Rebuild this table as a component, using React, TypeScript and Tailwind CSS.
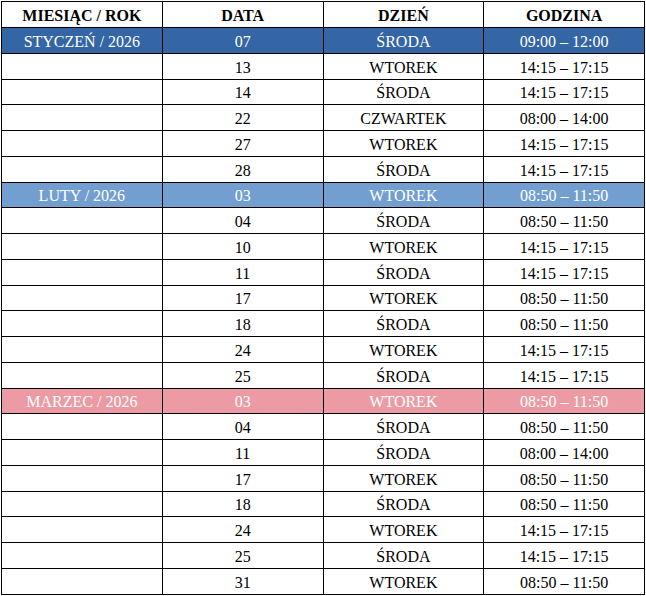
type Row = {
  month?: string
  date: string
  day: string
  time: string
  tone?: 'dark' | 'light' | 'pink'
}

const rows: Row[] = [
  { month: 'STYCZEŃ / 2026', date: '07', day: 'ŚRODA', time: '09:00 – 12:00', tone: 'dark' },
  { date: '13', day: 'WTOREK', time: '14:15 – 17:15' },
  { date: '14', day: 'ŚRODA', time: '14:15 – 17:15' },
  { date: '22', day: 'CZWARTEK', time: '08:00 – 14:00' },
  { date: '27', day: 'WTOREK', time: '14:15 – 17:15' },
  { date: '28', day: 'ŚRODA', time: '14:15 – 17:15' },
  { month: 'LUTY / 2026', date: '03', day: 'WTOREK', time: '08:50 – 11:50', tone: 'light' },
  { date: '04', day: 'ŚRODA', time: '08:50 – 11:50' },
  { date: '10', day: 'WTOREK', time: '14:15 – 17:15' },
  { date: '11', day: 'ŚRODA', time: '14:15 – 17:15' },
  { date: '17', day: 'WTOREK', time: '08:50 – 11:50' },
  { date: '18', day: 'ŚRODA', time: '08:50 – 11:50' },
  { date: '24', day: 'WTOREK', time: '14:15 – 17:15' },
  { date: '25', day: 'ŚRODA', time: '14:15 – 17:15' },
  { month: 'MARZEC / 2026', date: '03', day: 'WTOREK', time: '08:50 – 11:50', tone: 'pink' },
  { date: '04', day: 'ŚRODA', time: '08:50 – 11:50' },
  { date: '11', day: 'ŚRODA', time: '08:00 – 14:00' },
  { date: '17', day: 'WTOREK', time: '08:50 – 11:50' },
  { date: '18', day: 'ŚRODA', time: '08:50 – 11:50' },
  { date: '24', day: 'WTOREK', time: '14:15 – 17:15' },
  { date: '25', day: 'ŚRODA', time: '14:15 – 17:15' },
  { date: '31', day: 'WTOREK', time: '08:50 – 11:50' },
]

const toneClass = {
  dark: 'bg-[#3465a4] text-white',
  light: 'bg-[#729fcf] text-white',
  pink: 'bg-[#ec9ba4] text-white',
}

const cell = 'border border-black p-0 pt-[3px] text-center leading-none'

export default function App() {
  return (
    <div className="w-[646px] h-[596px] bg-white pl-px pt-px font-['Liberation_Serif',serif] text-[16px] text-black">
      <table className="w-[644px] table-fixed border-collapse border border-black">
        <thead>
          <tr className="h-[26px]">
            {['MIESIĄC / ROK', 'DATA', 'DZIEŃ', 'GODZINA'].map((h) => (
              <th key={h} className={`${cell} font-bold`}>
                {h}
              </th>
            ))}
          </tr>
        </thead>
        <tbody>
          {rows.map((r, i) => (
            <tr key={i} className={`h-[25.75px] ${r.tone ? toneClass[r.tone] : ''}`}>
              <td className={cell}>{r.month ?? ''}</td>
              <td className={cell}>{r.date}</td>
              <td className={cell}>{r.day}</td>
              <td className={cell}>{r.time}</td>
            </tr>
          ))}
        </tbody>
      </table>
    </div>
  )
}
